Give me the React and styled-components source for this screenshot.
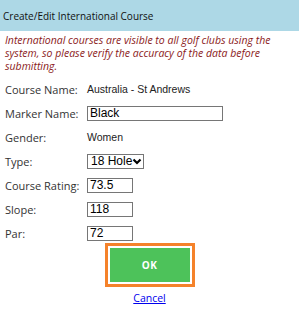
import React from "react";
import styled, { createGlobalStyle } from "styled-components";

const GlobalStyle = createGlobalStyle`
  body {
    margin: 0;
    background: #fff;
    font-family: "Open Sans", sans-serif;
  }
`;

const Dialog = styled.div`
  width: 299px;
  height: 310px;
  background: #fff;
`;

const Header = styled.div`
  height: 31px;
  background: #add8e6;
  display: flex;
  align-items: center;
  padding-left: 3px;
  font-size: 10px;
  color: #111;
`;

const Notice = styled.p`
  margin: 3px 0 0 0;
  padding: 0 10px 0 5px;
  font-size: 10.5px;
  line-height: 13px;
  font-style: italic;
  color: #8b1a1a;
`;

const Form = styled.div`
  display: grid;
  grid-template-columns: 82px 1fr;
  grid-auto-rows: 24px;
  align-items: center;
  padding: 4px 0 0 5px;
`;

const Label = styled.span`
  font-size: 11px;
  color: #333;
`;

const Value = styled.span`
  font-family: "Liberation Sans", Arial, sans-serif;
  font-size: 10.5px;
  color: #222;
`;

const Input = styled.input`
  box-sizing: border-box;
  width: ${({ $w }) => $w}px;
  height: 15px;
  margin: 0;
  padding: 0 2px;
  border: 1px solid #767676;
  font-family: "Liberation Sans", Arial, sans-serif;
  font-size: 12px;
  color: #000;
  outline: none;
`;

const SelectWrap = styled.div`
  position: relative;
  width: 57px;
  height: 15px;
`;

const Select = styled.select`
  appearance: none;
  box-sizing: border-box;
  display: block;
  width: 57px;
  height: 15px;
  margin: 0;
  padding: 0 0 0 3px;
  border: 1px solid #767676;
  border-radius: 0;
  background: #fff;
  font-family: "Liberation Sans", Arial, sans-serif;
  font-size: 12px;
  line-height: 13px;
  color: #000;
`;

const Chevron = styled.svg`
  position: absolute;
  right: 2px;
  top: 4px;
  pointer-events: none;
`;

const Actions = styled.div`
  display: flex;
  flex-direction: column;
  align-items: center;
  padding-top: 1px;
`;

const OkButton = styled.button`
  box-sizing: border-box;
  width: 84px;
  height: 38px;
  background: #4dc25a;
  border: 2px solid #fff;
  outline: 3px solid #f5822a;
  color: #fff;
  font-family: "Open Sans", sans-serif;
  font-weight: 700;
  font-size: 10px;
  letter-spacing: 0.5px;
`;

const Cancel = styled.a`
  margin-top: 7px;
  font-size: 10.5px;
  color: #0000ee;
  text-decoration: underline;
`;

export default function App() {
  return (
    <Dialog>
      <GlobalStyle />
      <Header>Create/Edit International Course</Header>
      <Notice>
        International courses are visible to all golf clubs using the
        system, so please verify the accuracy of the data before
        submitting.
      </Notice>
      <Form>
        <Label>Course Name:</Label>
        <Value>Australia - St Andrews</Value>
        <Label>Marker Name:</Label>
        <Input $w={136} defaultValue="Black" />
        <Label>Gender:</Label>
        <Value>Women</Value>
        <Label>Type:</Label>
        <SelectWrap>
          <Select defaultValue="18">
            <option value="18">18 Hole</option>
            <option value="9">9 Hole</option>
          </Select>
          <Chevron width="10" height="7" viewBox="0 0 10 7">
            <path d="M1.5 1.5 L5 5 L8.5 1.5" fill="none" stroke="#000" strokeWidth="2.2" />
          </Chevron>
        </SelectWrap>
        <Label>Course Rating:</Label>
        <Input $w={46} defaultValue="73.5" />
        <Label>Slope:</Label>
        <Input $w={46} defaultValue="118" />
        <Label>Par:</Label>
        <Input $w={46} defaultValue="72" />
      </Form>
      <Actions>
        <OkButton>OK</OkButton>
        <Cancel href="#">Cancel</Cancel>
      </Actions>
    </Dialog>
  );
}
